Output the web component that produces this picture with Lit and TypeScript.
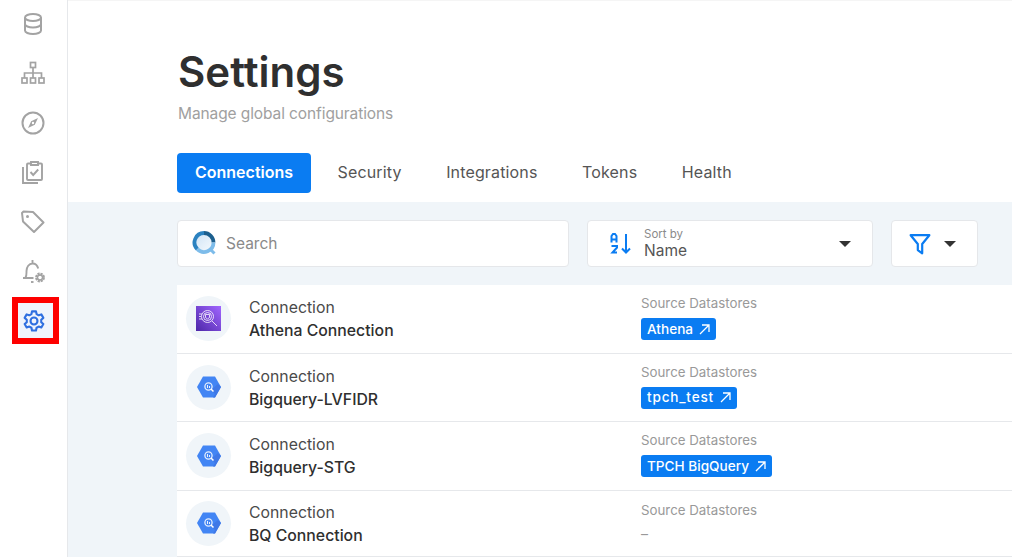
import { LitElement, html, css, svg } from 'lit';
import { customElement } from 'lit/decorators.js';

const gray = '#a3a3a3';

const navIcons = [
  svg`<g fill="none" stroke="${gray}" stroke-width="2"><ellipse cx="12" cy="5.5" rx="8" ry="3.5"/><path d="M4 5.5v13c0 2 3.6 3.5 8 3.5s8-1.500 8-3.500v-13M4 12c0 2 3.600 3.500 8 3.500s8-1.500 8-3.500"/></g>`,
  svg`<g fill="none" stroke="${gray}" stroke-width="1.700"><rect x="9.500" y="1.500" width="5" height="5"/><rect x="1" y="17" width="5" height="5"/><rect x="9.500" y="17" width="5" height="5"/><rect x="18" y="17" width="5" height="5"/><path d="M12 6.500V17M3.500 17v-5h17v5"/></g>`,
  svg`<g fill="none" stroke="${gray}" stroke-width="2"><circle cx="12" cy="12" r="10.500"/></g><path d="M17 7l-3.200 6.800L7 17l3.200-6.800z" fill="${gray}"/><circle cx="12" cy="12" r="1.200" fill="#fff"/>`,
  svg`<g fill="none" stroke="${gray}" stroke-width="1.900"><rect x="6" y="3.500" width="15" height="16.500" rx="1"/><path d="M2 7v16h15"/><path d="M10 5V2h7v3z" fill="#fff"/><path d="M9.500 12l2.700 3 5-5.500"/></g>`,
  svg`<g fill="none" stroke="${gray}" stroke-width="2" stroke-linejoin="round"><path d="M1 3l1.500-1.500 9.500.5 10.500 10.500-9.500 9.500L2 11.500z"/></g><circle cx="6.500" cy="6.500" r="1.500" fill="${gray}"/>`,
  svg`<g fill="none" stroke="${gray}" stroke-width="1.900"><path d="M2 19h10.500M4.500 18.500c1.200-1.800 1-3.500 1-6.500 0-4 2.500-7.500 6-7.500 3 0 5 2.200 5.700 5M11.500 4.500V1"/><path d="M10 23h2.500"/></g><circle cx="19" cy="18.500" r="3.500" fill="none" stroke="${gray}" stroke-width="2.800" stroke-dasharray="2 .75"/><circle cx="19" cy="18.500" r="2.500" fill="none" stroke="${gray}" stroke-width="1.400"/>`,
  svg`<g fill="none" stroke="#2f6fe0" stroke-width="2.300" stroke-linejoin="round"><path d="M9.800 1.500h4.400l.6 3 2.300 1.300 2.900-1 2.200 3.800-2.300 2 .0 2.700 2.300 2-2.200 3.800-2.900-1-2.300 1.300-.6 3H9.800l-.6-3-2.300-1.300-2.900 1-2.200-3.800 2.300-2v-2.700l-2.300-2L4 4.800l2.900 1 2.300-1.300z"/><circle cx="12" cy="12" r="3.800"/></g>`,
];

// spacing: the reference font runs wider on underscores than Inter does
const rows = [
  { name: 'Athena Connection', store: 'Athena', kind: 'athena', spacing: 0 },
  { name: 'Bigquery-LVFIDR', store: 'tpch_test', kind: 'bq', spacing: 0.8 },
  { name: 'Bigquery-STG', store: 'TPCH BigQuery', kind: 'bq', spacing: 0 },
  { name: 'BQ Connection', store: '', kind: 'bq', spacing: 0 },
];

const tabs = ['Connections', 'Security', 'Integrations', 'Tokens', 'Health'];

@customElement('app-root')
export class AppRoot extends LitElement {
  static styles = css`
    :host {
      display: flex;
      width: 1012px;
      height: 557px;
      overflow: hidden;
      background: #fff;
      font-family: Inter, 'Noto Sans', sans-serif;
      color: #333;
    }
    .side {
      flex: 0 0 67px;
      border-right: 1px solid #e6e8eb;
      display: flex;
      flex-direction: column;
      margin-top: -1px;
    }
    .nav {
      position: relative;
      height: 49.5px;
      padding-right: 1px;
      display: flex;
      align-items: center;
      justify-content: center;
    }
    .nav svg {
      width: 24px;
      height: 24px;
    }
    .mark {
      position: absolute;
      left: 12px;
      top: 1px;
      width: 47px;
      height: 47px;
      box-sizing: border-box;
      border: 6px solid #fe0000;
      padding-right: 4px;
      background: #f0f4fc;
      display: flex;
      align-items: center;
      justify-content: center;
    }
    .mark svg {
      width: 22px;
      height: 22px;
    }
    .main {
      flex: 1;
      min-width: 0;
      display: flex;
      flex-direction: column;
    }
    .head {
      height: 202px;
      box-sizing: border-box;
      padding: 44px 0 0 110px;
      border-top: 1px solid #f5f5f5;
    }
    h1 {
      margin: 0;
      font-size: 42px;
      line-height: 54px;
      font-weight: 600;
      color: #2f2f2f;
    }
    .sub {
      margin-top: 3px;
      font-size: 15.500px;
      line-height: 24px;
      color: #a0a0a0;
      letter-spacing: -0.1px;
    }
    .tabs {
      display: flex;
      margin: 27px 0 0 -1px;
      gap: 8.500px;
    }
    .tab {
      height: 40px;
      box-sizing: border-box;
      padding: 0 18px 2px;
      display: flex;
      align-items: center;
      font-size: 16px;
      letter-spacing: 0.15px;
      color: #555;
      border-radius: 4px;
    }
    .tab.on {
      background: #0a7cf2;
      color: #fff;
      font-weight: 600;
      letter-spacing: 0;
    }
    .body {
      flex: 1;
      background: #f0f5f9;
      padding-left: 109px;
    }
    .filters {
      height: 83px;
      box-sizing: border-box;
      padding-top: 18px;
      display: flex;
      gap: 18px;
    }
    .box {
      height: 47px;
      box-sizing: border-box;
      background: #fff;
      border: 1px solid #e5e7ea;
      border-radius: 4px;
      display: flex;
      align-items: center;
    }
    .search {
      width: 392px;
      padding-left: 14px;
      gap: 8px;
      font-size: 15.500px;
      color: #8a8a8a;
    }
    .sort {
      width: 286px;
      padding: 0 21px 0 22px;
      gap: 12px;
    }
    .sort .labels {
      flex: 1;
      display: flex;
      flex-direction: column;
    }
    .sort small {
      font-size: 11.500px;
      line-height: 14px;
      color: #8a8a8a;
    }
    .sort span {
      font-size: 15.500px;
      line-height: 19px;
      color: #555;
    }
    .filter {
      width: 87px;
      padding: 0 21px 0 17px;
      justify-content: space-between;
    }
    .caret {
      width: 0;
      height: 0;
      border-left: 6px solid transparent;
      border-right: 6px solid transparent;
      border-top: 6px solid #333;
    }
    .row {
      height: 68.600px;
      box-sizing: border-box;
      background: #fff;
      border-bottom: 1px solid #e6e8eb;
      display: flex;
      align-items: center;
      padding-left: 9px;
    }
    .row.short {
      height: 66px;
    }
    .logo {
      flex: 0 0 45px;
      height: 45px;
      border-radius: 50%;
      background: #f0f5f9;
      display: flex;
      align-items: center;
      justify-content: center;
    }
    .who {
      flex: 0 0 392px;
      margin-left: 18px;
      display: flex;
      flex-direction: column;
      gap: 2px;
      padding-top: 1px;
    }
    .who small {
      font-size: 15.800px;
      line-height: 21px;
      color: #4a4a4a;
    }
    .who b {
      font-size: 15.800px;
      line-height: 21px;
      font-weight: 500;
      color: #2f2f2f;
    }
    .store {
      display: flex;
      flex-direction: column;
      align-items: flex-start;
      gap: 6px;
      margin-bottom: 2px;
      font-size: 13.300px;
      line-height: 17px;
      color: #999;
    }
    .chip {
      height: 22px;
      padding: 0 6px;
      display: flex;
      align-items: center;
      gap: 6px;
      background: #0a7cf2;
      border-radius: 3px;
      color: #fff;
      font-size: 13.600px;
      font-weight: 500;
    }
    .dash {
      height: 17px;
      line-height: 17px;
      font-size: 14px;
    }
  `;

  logo(kind: string) {
    if (kind === 'athena') {
      return html`<svg width="25" height="25" viewBox="0 0 25 25">
        <defs>
          <linearGradient id="ath" x1="0" y1="1" x2="1" y2="0">
            <stop offset="0" stop-color="#4d27a8" />
            <stop offset="1" stop-color="#a166ff" />
          </linearGradient>
        </defs>
        <rect width="25" height="25" fill="url(#ath)" />
        <g fill="none" stroke="#fff" stroke-width=".8">
          <circle cx="11.500" cy="10.500" r="6" />
          <circle cx="11.500" cy="10.500" r="4" />
          <path d="M9.500 8.500h4v3l-2 1.500-2-1.500zM16 15l5 5M3 8h3M3 10.500h2M3 13h3" />
        </g>
      </svg>`;
    }
    return html`<svg width="24" height="22" viewBox="0 0 24 22">
      <path d="M6 0.500h12l6 10.500-6 10.500H6L0 11z" fill="#4285f4" />
      <path d="M14 14l4 4-2 3.500h2l6-10.500-3-3z" fill="#3f78e6" />
      <circle cx="11.500" cy="10.500" r="3.600" fill="none" stroke="#e3edfd" stroke-width="1.300" />
      <path d="M14 13l2.500 2.500" stroke="#fff" stroke-width="1.500" />
      <path d="M10.500 9v3M12.500 10v2" stroke="#fff" stroke-width=".9" />
    </svg>`;
  }

  render() {
    return html`
      <div class="side">
        ${navIcons.map((icon, i) =>
          i === navIcons.length - 1
            ? html`<div class="nav">
                <div class="mark"><svg viewBox="0 0 24 24">${icon}</svg></div>
              </div>`
            : html`<div class="nav"><svg viewBox="0 0 24 24">${icon}</svg></div>`
        )}
      </div>
      <div class="main">
        <div class="head">
          <h1>Settings</h1>
          <div class="sub">Manage global configurations</div>
          <div class="tabs">
            ${tabs.map((t, i) => html`<div class="tab ${i === 0 ? 'on' : ''}">${t}</div>`)}
          </div>
        </div>
        <div class="body">
          <div class="filters">
            <div class="box search">
              <svg width="26" height="26" viewBox="0 0 26 26">
                <defs>
                  <linearGradient id="sg" x1="0" y1="0" x2="1" y2="1">
                    <stop offset="0" stop-color="#cfe3f5" />
                    <stop offset="1" stop-color="#f6fafd" />
                  </linearGradient>
                </defs>
                <circle cx="12" cy="11.500" r="9" fill="url(#sg)" />
                <path d="M5.300 18.200A9.500 9.500 0 0 1 12 2" fill="none" stroke="#2b82c0" stroke-width="3.800" />
                <path d="M12 2A9.500 9.500 0 0 1 21.500 11.500" fill="none" stroke="#1c5f8e" stroke-width="3.800" />
                <path d="M21.500 11.500A9.500 9.500 0 0 1 5.300 18.200" fill="none" stroke="#7dbcea" stroke-width="3.800" />
                <path d="M18 18l4.500 4.500" fill="none" stroke="#7dbcea" stroke-width="3" />
              </svg>
              Search
            </div>
            <div class="box sort">
              <svg width="22" height="22" viewBox="0 0 22 22">
                <path d="M16 1v18M12 15.500l4 4 4-4" fill="none" stroke="#0a7cf2" stroke-width="2" />
                <path d="M1.500 9.500V3l1.500-2h2l1.500 2v6.500M1.500 6.500h5M1.500 13h5.500v1.500L2.500 19.500H7" fill="none" stroke="#0a7cf2" stroke-width="2" />
              </svg>
              <div class="labels"><small>Sort by</small><span>Name</span></div>
              <div class="caret"></div>
            </div>
            <div class="box filter">
              <svg width="22" height="22" viewBox="0 0 20 20">
                <path d="M1.500 2h17l-6.500 8v8.500l-4-3V10z" fill="none" stroke="#0a7cf2" stroke-width="2" stroke-linejoin="round" />
              </svg>
              <div class="caret"></div>
            </div>
          </div>
          ${rows.map(
            (r) => html`
              <div class="row ${r.store ? '' : 'short'}">
                <div class="logo">${this.logo(r.kind)}</div>
                <div class="who"><small>Connection</small><b>${r.name}</b></div>
                <div class="store">
                  Source Datastores
                  ${r.store
                    ? html`<div class="chip">
                        <span style="letter-spacing:${r.spacing}px">${r.store}</span>
                        <svg width="11" height="11" viewBox="0 0 11 11">
                          <path d="M1 10L10 1M3 1h7v7" fill="none" stroke="#fff" stroke-width="1.300" />
                        </svg>
                      </div>`
                    : html`<div class="dash">–</div>`}
                </div>
              </div>
            `
          )}
        </div>
      </div>
    `;
  }
}
